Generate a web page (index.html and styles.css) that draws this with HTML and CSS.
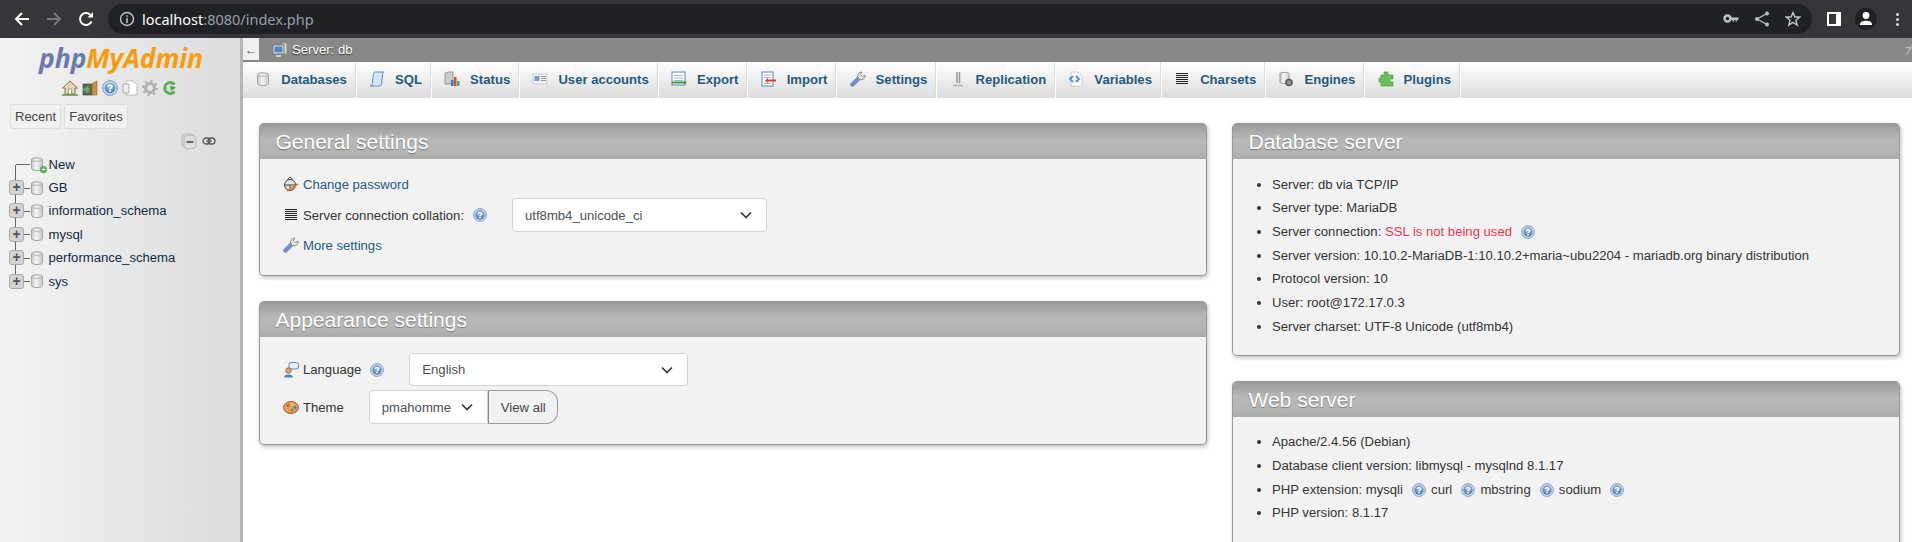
FILE: index.html

```html
<!DOCTYPE html>
<html lang="en">
<head>
  <meta charset="UTF-8">
  <meta name="viewport" content="width=device-width, initial-scale=1.0">
  <title>phpMyAdmin</title>
  <link rel="stylesheet" href="styles.css">
</head>
<body>
  <svg class="defs" width="0" height="0" aria-hidden="true">
    <defs>
      <linearGradient id="cyl" x1="0" x2="1" y1="0" y2="0">
        <stop offset="0" stop-color="#c4c4c4"/><stop offset=".4" stop-color="#f6f6f6"/><stop offset="1" stop-color="#cacaca"/>
      </linearGradient>
      <radialGradient id="helpfill" cx=".5" cy=".35" r=".7">
        <stop offset="0" stop-color="#a9c4ea"/><stop offset="1" stop-color="#3f6fb5"/>
      </radialGradient>
      <symbol id="i-db" viewBox="0 0 16 16">
        <path d="M2.500 3.500C2.500 1.300 13.500 1.300 13.500 3.500V12.500C13.500 15.200 2.500 15.200 2.500 12.500Z" fill="url(#cyl)" stroke="#a5a5a5"/>
        <path d="M2.500 4C4 5.800 12 5.800 13.500 4" fill="none" stroke="#b5b5b5"/>
      </symbol>
      <symbol id="i-help" viewBox="0 0 16 16">
        <circle cx="8" cy="8" r="7.300" fill="#cfdcf0" stroke="#6f93c8"/>
        <circle cx="8" cy="8" r="5.300" fill="url(#helpfill)"/>
        <path d="M6 6.600C6.100 4.600 10 4.600 10 6.600C10 8 8 7.800 8 9.400" fill="none" stroke="#fff" stroke-width="1.600"/>
        <rect x="7.100" y="10.300" width="1.800" height="1.600" fill="#fff"/>
      </symbol>
      <symbol id="i-lines" viewBox="0 0 16 16">
        <path d="M2 2.500H14M2 4.500H14M2 6.500H14M2 8.500H14M2 10.500H14M2 12.500H14" stroke="#222" stroke-width="1"/>
      </symbol>
      <symbol id="i-wrench" viewBox="0 0 16 16">
        <path d="M2.500 13.500L9 7" stroke="#6d8fd0" stroke-width="4.500" stroke-linecap="round"/>
        <path d="M8.500 7.500A4 4 0 0 1 12 1L10.500 3.500L12.500 5.500L15 4A4 4 0 0 1 9.500 8.500Z" fill="#e2e2e2" stroke="#777" stroke-width=".8"/>
      </symbol>
      <symbol id="i-server" viewBox="0 0 16 16">
        <rect x="10" y="1" width="5" height="11" fill="#ddd" stroke="#888"/>
        <rect x="1" y="3" width="11" height="9" fill="#e4e4e4" stroke="#777"/>
        <rect x="2.500" y="4.500" width="8" height="6" fill="#4f86c6"/>
        <path d="M4 14H9" stroke="#ccc" stroke-width="2"/>
      </symbol>
    </defs>
  </svg>

  <header class="chrome">
    <svg class="ch-btn" viewBox="0 0 16 16"><path d="M15 8H2M8 2L2 8L8 14" fill="none" stroke="#fff" stroke-width="2"/></svg>
    <svg class="ch-btn" viewBox="0 0 16 16"><path d="M1 8H14M8 2L14 8L8 14" fill="none" stroke="#77797d" stroke-width="2"/></svg>
    <svg class="ch-btn" viewBox="0 0 16 16"><path d="M13.500 10.500A6 6 0 1 1 12.200 3.700" fill="none" stroke="#fff" stroke-width="2"/><path d="M9.500 6.500H15V1Z" fill="#fff"/></svg>
    <div class="omnibox">
      <svg class="ch-info" viewBox="0 0 16 16"><circle cx="8" cy="8" r="6.500" fill="none" stroke="#c4c7c9" stroke-width="1.400"/><path d="M8 7V12M8 4.200V5.800" stroke="#c4c7c9" stroke-width="1.500"/></svg>
      <span class="url">localhost<span class="url-rest">:8080/index.php</span></span>
      <span class="omni-icons">
        <svg class="ch-icon" viewBox="0 0 16 16"><circle cx="4.500" cy="7.500" r="3" fill="none" stroke="#bdc1c6" stroke-width="2.400"/><path d="M7 6.500H15.500V9H14V10.500H12.500V9H11V10.500H9.500V9H7Z" fill="#bdc1c6"/></svg>
        <svg class="ch-icon" viewBox="0 0 16 16"><path d="M13 2.500L3 8L13 13.500" fill="none" stroke="#bdc1c6" stroke-width="1.300"/><circle cx="13" cy="2.500" r="2" fill="#bdc1c6"/><circle cx="3" cy="8" r="2" fill="#bdc1c6"/><circle cx="13" cy="13.500" r="2" fill="#bdc1c6"/></svg>
        <svg class="ch-icon" viewBox="0 0 16 16"><path d="M8 1.500L9.900 6H14.800L10.900 9.200L12.300 14.200L8 11.400L3.700 14.200L5.100 9.200L1.200 6H6.100Z" fill="none" stroke="#bdc1c6" stroke-width="1.400"/></svg>
      </span>
    </div>
    <svg class="ch-panel" viewBox="0 0 14 14"><rect width="14" height="14" fill="#fff"/><rect x="2" y="2" width="7" height="10" fill="#35363a"/></svg>
    <span class="avatar"><svg viewBox="0 0 22 22"><circle cx="11" cy="7.500" r="3.400" fill="#fff"/><path d="M5 16C5 11.500 17 11.500 17 16V17H5Z" fill="#fff"/></svg></span>
    <span class="ch-dots"><i></i><i></i><i></i></span>
  </header>

  <div class="app">
    <aside class="sidebar">
      <div class="logo"><span class="logo-php">php</span><span class="logo-my">MyAdmin</span></div>
      <div class="nav-icons">
        <svg class="ni" viewBox="0 0 16 16"><path d="M8 1L0.500 8H3V14H13V8H15.500Z" fill="#e2d3b4" stroke="#a0703a"/><rect x="6.500" y="9" width="3" height="5" fill="#fff" stroke="#777" stroke-width=".6"/><path d="M0 15H16" stroke="#5c9a3a" stroke-width="1.500"/></svg>
        <svg class="ni" viewBox="0 0 16 16"><rect x="1" y="4" width="9" height="11" fill="#5d6b5a" stroke="#333" stroke-width=".6"/><path d="M1 9.500H7M7 9.500L4.500 7M7 9.500L4.500 12" stroke="#5fc04a" stroke-width="2" fill="none"/><path d="M10 3.500L15 1V15H10Z" fill="#d2913f" stroke="#9a6320" stroke-width=".6"/></svg>
        <svg class="ni" viewBox="0 0 16 16"><use href="#i-help"/></svg>
        <svg class="ni" viewBox="0 0 16 16"><path d="M4 1H11L15 5V15H4Z" fill="#fff" stroke="#bbb"/><rect x="1" y="4" width="6" height="9" rx="1" fill="#eee" stroke="#aaa"/></svg>
        <svg class="ni" viewBox="0 0 16 16"><circle cx="8" cy="8" r="4.500" fill="none" stroke="#b0b0b0" stroke-width="3"/><circle cx="8" cy="8" r="7" fill="none" stroke="#b0b0b0" stroke-width="2" stroke-dasharray="2.500 3"/></svg>
        <svg class="ni" viewBox="0 0 16 16"><path d="M12.500 4.500A5.500 5.500 0 1 0 12.500 11.500" fill="none" stroke="#5cb054" stroke-width="3"/><path d="M8 5.500L14 7.500L9 11Z" fill="#4fa84a"/></svg>
      </div>
      <div class="tabs-mini">
        <button class="mini-btn">Recent</button>
        <button class="mini-btn">Favorites</button>
      </div>
      <div class="tree-tools">
        <svg class="collapse" viewBox="0 0 16 16"><rect x="1" y="1" width="12" height="13" rx="3" fill="#d8d8d8" stroke="#bbb"/><rect x="3" y="2.500" width="12" height="13" rx="3" fill="#ddd" stroke="#bbb"/><path d="M5.500 9H12.500" stroke="#666" stroke-width="2"/></svg>
        <svg class="link" viewBox="0 0 14 8"><rect x="1" y="1" width="7" height="6" rx="3" fill="none" stroke="#555" stroke-width="1.300"/><rect x="6" y="1" width="7" height="6" rx="3" fill="none" stroke="#555" stroke-width="1.300"/><path d="M4 4H10" stroke="#555"/></svg>
      </div>
      <ul class="tree">
        <li class="tree-row">
          <span class="expander none"></span>
          <span class="db-wrap"><svg class="db-ico"><use href="#i-db"/></svg><b class="plus-badge">+</b></span>
          <span class="db-name">New</span>
        </li>
        <li class="tree-row"><span class="expander">+</span><svg class="db-ico"><use href="#i-db"/></svg><span class="db-name">GB</span></li>
        <li class="tree-row"><span class="expander">+</span><svg class="db-ico"><use href="#i-db"/></svg><span class="db-name">information_schema</span></li>
        <li class="tree-row"><span class="expander">+</span><svg class="db-ico"><use href="#i-db"/></svg><span class="db-name">mysql</span></li>
        <li class="tree-row"><span class="expander">+</span><svg class="db-ico"><use href="#i-db"/></svg><span class="db-name">performance_schema</span></li>
        <li class="tree-row"><span class="expander">+</span><svg class="db-ico"><use href="#i-db"/></svg><span class="db-name">sys</span></li>
      </ul>
    </aside>

    <main class="main">
      <div class="serverbar">
        <span class="back-btn">←</span>
        <svg class="srv-ico"><use href="#i-server"/></svg>
        <span class="srv-name">Server: db</span>
        <svg class="srv-corner" viewBox="0 0 8 10"><path d="M0 1H7L2 9" fill="none" stroke="#bbb" stroke-width="1.500"/></svg>
      </div>

      <nav class="topnav">
        <a class="tab"><svg class="tab-ico"><use href="#i-db"/></svg>Databases</a>
        <a class="tab"><svg class="tab-ico" viewBox="0 0 16 16"><path d="M4.500 3C4.500 1 6 1 7 1H15C13.500 1 13.500 3 13.500 4L12.500 13C12.300 15 11 15 10 15H1C2.500 15 3 14 3.200 12.500Z" fill="#d6e4f6" stroke="#5c8bc8"/></svg>SQL</a>
        <a class="tab"><svg class="tab-ico" viewBox="0 0 16 16"><path d="M1 2L5 1H9V13H1Z" fill="#ccc" stroke="#999"/><rect x="7" y="9" width="2.500" height="6" fill="#3a7ad0"/><rect x="10" y="6" width="2.500" height="9" fill="#d94b3d"/><rect x="13" y="10" width="2.500" height="5" fill="#4aa84a"/></svg>Status</a>
        <a class="tab"><svg class="tab-ico" viewBox="0 0 16 16"><rect x="1" y="3" width="14" height="10" fill="#f6f6f6" stroke="#ccc"/><rect x="2.500" y="5" width="5" height="5" fill="#6f9bd8"/><path d="M9 5.500H14M9 7.500H14M9 9.500H14" stroke="#999"/></svg>User accounts</a>
        <a class="tab"><svg class="tab-ico" viewBox="0 0 16 16"><rect x="1" y="1" width="13" height="13" fill="#fff" stroke="#5a85c0"/><path d="M3 4.500H12M3 7H12M3 9.500H12" stroke="#9bb6da"/><path d="M1 11.500H14" stroke="#3a9a3a" stroke-width="2"/><path d="M13 9.500L16 11.500L13 13.500Z" fill="#3a9a3a"/></svg>Export</a>
        <a class="tab"><svg class="tab-ico" viewBox="0 0 16 16"><rect x="1" y="1" width="11" height="14" fill="#fff" stroke="#5a85c0"/><path d="M3 4H10M3 6.500H10M3 12.500H10" stroke="#9bb6da"/><path d="M6 9.500H15" stroke="#e5383b" stroke-width="2"/><path d="M7 7L4 9.500L7 12Z" fill="#e5383b"/></svg>Import</a>
        <a class="tab"><svg class="tab-ico"><use href="#i-wrench"/></svg>Settings</a>
        <a class="tab"><svg class="tab-ico" viewBox="0 0 16 16"><path d="M7 1V12M9.500 1V12" stroke="#999" stroke-width="1.500"/><path d="M3 14.500H13" stroke="#bbb" stroke-width="2"/></svg>Replication</a>
        <a class="tab"><svg class="tab-ico" viewBox="0 0 16 16"><path d="M3 1H10L14 5V15H3Z" fill="#fff" stroke="#ccc"/><path d="M5 5L2 8L5 11M8 5L11 8L8 11" fill="none" stroke="#4a90e2" stroke-width="2"/></svg>Variables</a>
        <a class="tab"><svg class="tab-ico"><use href="#i-lines"/></svg>Charsets</a>
        <a class="tab"><svg class="tab-ico" viewBox="0 0 16 16"><path d="M2 2.500C2 1 11 1 11 2.500V11C11 13 2 13 2 11Z" fill="url(#cyl)" stroke="#999"/><circle cx="11" cy="11.500" r="3" fill="#999" stroke="#555" stroke-width="1.500"/></svg>Engines</a>
        <a class="tab"><svg class="tab-ico" viewBox="0 0 16 16"><path d="M6 1H10V4H15V8H12V11H15V15H3V11H1V7H3V4H6Z" fill="#6cc05a" stroke="#3f8f35" stroke-width=".6"/></svg>Plugins</a>
      </nav>

      <div class="columns">
        <div class="col-left">
          <section class="panel">
            <h2 class="panel-head">General settings</h2>
            <div class="panel-body general">
              <div class="row">
                <svg class="row-ico" viewBox="0 0 16 16"><circle cx="7" cy="9" r="5.500" fill="#e6e6e6" stroke="#444"/><path d="M5 4C5 0.500 9 0.500 9 4" fill="none" stroke="#444"/><path d="M2 9H12M7 9V12" stroke="#444"/><path d="M4 15L15 8" stroke="#d9722c" stroke-width="1.500"/></svg>
                <a class="link-text">Change password</a>
              </div>
              <div class="row row-field">
                <svg class="row-ico"><use href="#i-lines"/></svg>
                <span class="label">Server connection collation:</span>
                <svg class="help"><use href="#i-help"/></svg>
                <div class="select wide">utf8mb4_unicode_ci<svg class="chev" viewBox="0 0 12 8"><path d="M1 1.500L6 6.500L11 1.500" fill="none" stroke="#343a40" stroke-width="1.700"/></svg></div>
              </div>
              <div class="row">
                <svg class="row-ico"><use href="#i-wrench"/></svg>
                <a class="link-text">More settings</a>
              </div>
            </div>
          </section>

          <section class="panel">
            <h2 class="panel-head">Appearance settings</h2>
            <div class="panel-body appearance">
              <div class="row">
                <svg class="row-ico" viewBox="0 0 16 16"><rect x="6" y="0.500" width="9.500" height="6.500" rx="2" fill="#e8f0fb" stroke="#5c8bc8"/><circle cx="5.500" cy="8.500" r="2.800" fill="#d9a070" stroke="#7a4a20" stroke-width=".6"/><path d="M1 15.500C1 11.500 10 11.500 10 15.500Z" fill="#3f83c8"/></svg>
                <span class="label">Language</span>
                <svg class="help"><use href="#i-help"/></svg>
                <div class="select lang">English<svg class="chev" viewBox="0 0 12 8"><path d="M1 1.500L6 6.500L11 1.500" fill="none" stroke="#343a40" stroke-width="1.700"/></svg></div>
              </div>
              <div class="row">
                <svg class="row-ico" viewBox="0 0 16 16"><ellipse cx="8" cy="8.500" rx="7.500" ry="6" fill="#e0a060" stroke="#9a6320"/><circle cx="5" cy="6.500" r="1.500" fill="#d94b3d"/><circle cx="9" cy="5.500" r="1.500" fill="#f0d040"/><circle cx="12" cy="8.500" r="1.500" fill="#3a7ad0"/><circle cx="9" cy="11" r="1.500" fill="#4aa84a"/></svg>
                <span class="label">Theme</span>
                <div class="theme-group">
                  <div class="select theme">pmahomme<svg class="chev" viewBox="0 0 12 8"><path d="M1 1.500L6 6.500L11 1.500" fill="none" stroke="#343a40" stroke-width="1.700"/></svg></div>
                  <button class="view-all">View all</button>
                </div>
              </div>
            </div>
          </section>
        </div>

        <div class="col-right">
          <section class="panel">
            <h2 class="panel-head">Database server</h2>
            <ul class="panel-body info-list">
              <li>Server: db via TCP/IP</li>
              <li>Server type: MariaDB</li>
              <li>Server connection: <span class="warn">SSL is not being used</span> <svg class="help help-in"><use href="#i-help"/></svg></li>
              <li>Server version: 10.10.2-MariaDB-1:10.10.2+maria~ubu2204 - mariadb.org binary distribution</li>
              <li>Protocol version: 10</li>
              <li>User: root@172.17.0.3</li>
              <li>Server charset: UTF-8 Unicode (utf8mb4)</li>
            </ul>
          </section>

          <section class="panel">
            <h2 class="panel-head">Web server</h2>
            <ul class="panel-body info-list web-list">
              <li>Apache/2.4.56 (Debian)</li>
              <li>Database client version: libmysql - mysqlnd 8.1.17</li>
              <li>PHP extension: mysqli <svg class="help help-in"><use href="#i-help"/></svg> curl <svg class="help help-in"><use href="#i-help"/></svg> mbstring <svg class="help help-in"><use href="#i-help"/></svg> sodium <svg class="help help-in"><use href="#i-help"/></svg></li>
              <li>PHP version: 8.1.17</li>
            </ul>
          </section>
        </div>
      </div>
    </main>
  </div>
</body>
</html>
```

FILE: styles.css

```css
html,body{
  margin: 0;
  height: 100%;
  overflow: hidden;
}
body{
  font-family: "Liberation Sans", Arial, sans-serif;
  font-size: 13.12px;
  color: #444;
  display: flex;
  flex-direction: column;
}
.defs{
  position: absolute;
}

/* browser bar */
.chrome{
  height: 38px;
  flex: none;
  background: #35363a;
  display: flex;
  align-items: center;
  padding-left: 14px;
}
.ch-btn{
  width: 16px;
  height: 16px;
  margin-right: 16px;
}
.omnibox{
  width: 1704px;
  height: 30px;
  margin-left: -2px;
  padding-left: 11px;
  box-sizing: border-box;
  background: #202124;
  border-radius: 15px;
  display: flex;
  align-items: center;
}
.ch-info{
  width: 16px;
  height: 16px;
}
.url{
  font-family: "Noto Sans", sans-serif;
  font-size: 14.5px;
  color: #fff;
  margin-left: 7px;
}
.url-rest{
  color: #9aa0a6;
}
.omni-icons{
  margin-left: auto;
  margin-right: 11px;
  display: flex;
  gap: 15px;
}
.ch-icon{
  width: 16px;
  height: 16px;
}
.ch-panel{
  width: 14px;
  height: 14px;
  margin-left: 15px;
}
.avatar{
  width: 22px;
  height: 22px;
  margin-left: 14px;
  border-radius: 50%;
  background: #202124;
}
.avatar svg{
  display: block;
}
.ch-dots{
  margin-left: 19px;
  display: flex;
  flex-direction: column;
  gap: 2px;
}
.ch-dots i{
  width: 3px;
  height: 3px;
  background: #dadce0;
  border-radius: 50%;
}

.app{
  flex: 1;
  display: flex;
  min-height: 0;
}

/* navigation panel */
.sidebar{
  width: 240px;
  flex: none;
  background: linear-gradient(to right, #f3f3f3, #dadcde);
  border-right: 3px solid #b5b5b5;
}
.logo{
  font-family: "Open Sans", "Liberation Sans", sans-serif;
  font-size: 26.5px;
  font-weight: 700;
  font-style: italic;
  letter-spacing: -.1px;
  line-height: 30px;
  text-align: center;
  padding: 5px 0 0 2px;
}
.logo-php{
  color: #6c78af;
}
.logo-my{
  color: #f89c0e;
}
.nav-icons{
  display: flex;
  justify-content: center;
  gap: 4px;
  margin-top: 7px;
}
.ni{
  width: 16px;
  height: 16px;
}
.tabs-mini{
  display: flex;
  gap: 3px;
  padding-left: 10px;
  margin-top: 8px;
}
.mini-btn{
  height: 25px;
  padding: 0 4px;
  font: 13px "Liberation Sans", sans-serif;
  color: #444;
  background: #f1f1f1;
  border: 1px solid #ddd;
  border-radius: 3px;
}
.tree-tools{
  display: flex;
  gap: 5px;
  align-items: center;
  padding-left: 181px;
  margin-top: 4px;
}
.collapse{
  width: 16px;
  height: 16px;
}
.link{
  width: 14px;
  height: 8px;
}
.tree{
  list-style: none;
  margin: 3.5px 0 0;
  padding: 0;
  position: relative;
}
/* tree connector */
.tree::before{
  content: "";
  position: absolute;
  left: 15px;
  top: 12px;
  height: 116px;
  border-left: 1px solid #666;
}
.tree-row{
  height: 23.4px;
  display: flex;
  align-items: center;
  padding-left: 9px;
  position: relative;
}
.tree-row::before{
  content: "";
  position: absolute;
  left: 16px;
  width: 14px;
  top: 50%;
  border-top: 1px solid #666;
}
.expander{
  width: 13px;
  height: 13px;
  flex: none;
  border: 1px solid #aaa;
  border-radius: 3px;
  background: #d4d4d4;
  color: #555;
  font-weight: 700;
  font-size: 14px;
  line-height: 12px;
  text-align: center;
  position: relative;
  z-index: 1;
}
.expander.none{
  visibility: hidden;
}
.db-ico{
  width: 16px;
  height: 16px;
  flex: none;
  margin-left: 5px;
  position: relative;
  z-index: 1;
}
.db-wrap{
  display: flex;
  position: relative;
}
.plus-badge{
  position: absolute;
  right: -2px;
  bottom: -1px;
  width: 7px;
  height: 7px;
  border-radius: 50%;
  background: #4aa84a;
  color: #fff;
  font-size: 8px;
  line-height: 7px;
  text-align: center;
  z-index: 2;
}
.db-name{
  margin-left: 3.5px;
  color: #0e2a44;
}

/* main */
.main{
  flex: 1;
  min-width: 0;
  background: #fff;
}
.serverbar{
  height: 24px;
  background: #888;
  display: flex;
  align-items: flex-start;
  position: relative;
}
.back-btn{
  width: 16px;
  height: 22px;
  background: #f0f0f0;
  color: #555;
  font-size: 12px;
  line-height: 24px;
  text-align: center;
}
.srv-ico{
  width: 16px;
  height: 16px;
  margin: 4px 0 0 13px;
}
.srv-name{
  color: #fff;
  text-shadow: 0 1px 1px #333;
  margin: 4px 0 0 4px;
  line-height: 16px;
}
.srv-corner{
  position: absolute;
  right: 0;
  top: 8px;
  width: 7px;
  height: 10px;
}
.topnav{
  display: flex;
  height: 36px;
  background: linear-gradient(#fff, #dcdcdc);
}
.tab{
  display: flex;
  align-items: center;
  gap: 10px;
  padding: 0 9px 2px 12.2px;
  box-sizing: border-box;
  font-weight: 700;
  color: #235a81;
  border-right: 1px solid #fff;
  box-shadow: inset -1px 0 0 #ddd;
  white-space: nowrap;
}
.tab-ico{
  width: 16px;
  height: 16px;
  flex: none;
}

.columns{
  display: flex;
  gap: 25px;
  padding: 25px 12px 0 16px;
}
.col-left{
  width: 948px;
  flex: none;
  display: flex;
  flex-direction: column;
  gap: 25px;
}
.col-right{
  flex: 1;
  display: flex;
  flex-direction: column;
  gap: 25px;
}
.panel{
  border: 1px solid #999;
  border-top: 0;
  border-radius: 5px;
  background: #f2f2f2;
  box-shadow: 1px 2px 4px rgba(0,0,0,.25);
  overflow: hidden;
}
.panel-head{
  margin: 0;
  height: 36px;
  padding-left: 15.5px;
  font-size: 21px;
  font-weight: 400;
  line-height: 37px;
  color: #fff;
  text-shadow: 0 1px 1px #777;
  background: linear-gradient(#999, #b8b8b8 45%, #b4b4b4 80%, #aaa);
}
.panel-body{
  margin: 0;
}
.general{
  padding: 15px 23px 20px;
}
.appearance{
  padding: 16px 23px 20px;
}
.row{
  display: flex;
  align-items: center;
  min-height: 20px;
}
.row-field{
  margin: 4px 0 3px;
}
.appearance .row + .row{
  margin-top: 4px;
}
.row-ico{
  width: 16px;
  height: 16px;
  flex: none;
  margin-right: 4px;
}
.link-text{
  color: #235a81;
}
.label{
  color: #333;
}
.help{
  width: 14px;
  height: 14px;
  margin-left: 9px;
}
.help-in{
  vertical-align: -3px;
  margin: 0 1.5px 0 5.4px;
}
.select{
  height: 34px;
  box-sizing: border-box;
  border: 1px solid #ced4da;
  border-radius: 4px;
  background: #fff;
  color: #495057;
  display: flex;
  align-items: center;
  justify-content: space-between;
  padding: 0 14px 0 12px;
  margin-left: 25px;
}
.chev{
  width: 12px;
  height: 8px;
}
.wide{
  width: 255px;
}
.lang{
  width: 279px;
  height: 33px;
}
.theme-group{
  display: flex;
  margin-left: 25px;
}
.theme{
  width: 119.5px;
  margin-left: 0;
  border-radius: 4px 0 0 4px;
}
.view-all{
  width: 70px;
  height: 34px;
  font: 13.12px "Liberation Sans", sans-serif;
  color: #444;
  background: #f2f2f2;
  border: 1px solid #999;
  border-left: 1px solid #888;
  border-radius: 0 12px 12px 0;
  padding: 0;
}
.info-list{
  padding: 13.5px 0 16.5px 39px;
}
.web-list{
  padding-bottom: 30px;
}
.info-list li{
  height: 23.7px;
  line-height: 23.7px;
  color: #333;
}
.warn{
  color: #e8384f;
}
```
